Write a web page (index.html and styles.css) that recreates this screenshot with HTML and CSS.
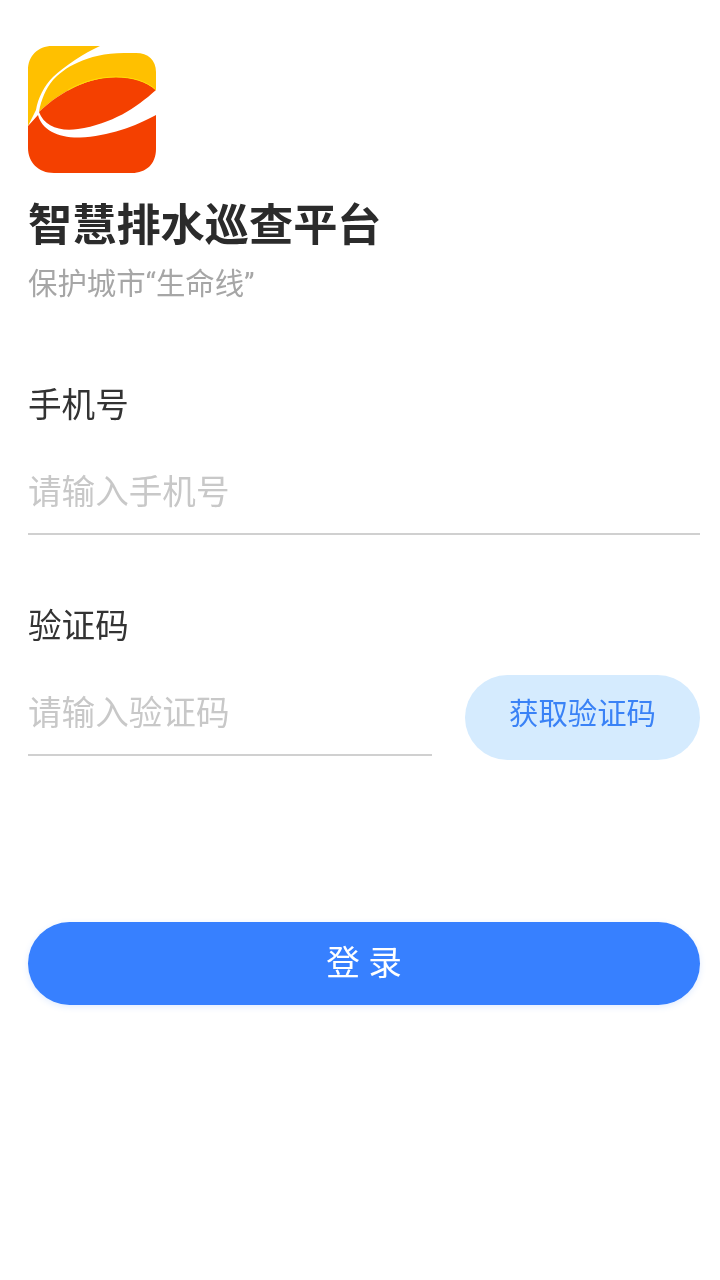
FILE: index.html
```html
<!DOCTYPE html>
<html lang="zh-CN">
<head>
<meta charset="utf-8">
<title>智慧排水巡查平台</title>
<link rel="stylesheet" href="styles.css">
</head>
<body>
<main class="page">
  <svg class="logo" viewBox="0 0 128 128" aria-hidden="true">
    <path class="logo-yellow" d="M24 0H72C56 7 37 20 25 31C16 40 10 52 8 64L0 80V24C0 10 10 0 24 0Z"/>
    <path class="logo-yellow" d="M11 66C13 54 18 42 25 34C35 23 58 7 96 7H108C120 7 128 14 128 26V44C118 35 104 31 88 31C62 31 34 44 11 66Z"/>
    <path class="logo-red" d="M11 66C34 44 62 31 88 31C104 31 118 35 128 44C108 62 84 78 50 83C32 86 16 80 11 66Z"/>
    <path class="logo-edge" d="M40 44C56 35 72 31 88 31C104 31 118 35 128 44"/>
    <path class="logo-red" d="M128 69V103C128 118 118 127 104 127H26C10 127 0 116 0 102V80L10 69C14 84 30 92 52 91.5C80 90.5 108 80 128 69Z"/>
  </svg>
  <h1 class="title">智慧排水巡查平台</h1>
  <p class="subtitle">保护城市“生命线”</p>

  <form class="form">
    <div class="field field-phone">
      <div class="label">手机号</div>
      <div class="input">请输入手机号</div>
    </div>
    <div class="field field-code">
      <div class="label">验证码</div>
      <div class="code-row">
        <div class="input input-code">请输入验证码</div>
        <div class="code-btn">获取验证码</div>
      </div>
    </div>
    <div class="login-btn">登 录</div>
  </form>
</main>
</body>
</html>
```

FILE: styles.css
```css
* { box-sizing: border-box; }
html, body { margin: 0; padding: 0; background: #fff; }
body {
  font-family: Roboto, "Noto Sans CJK SC", sans-serif;
  width: 720px;
  height: 1280px;
  overflow: hidden;
}
.page { padding: 46px 20px 0 28px; filter: blur(0.4px); }
.logo { display: block; width: 128px; height: 128px; }
.logo-yellow { fill: #ffc000; }
.logo-red { fill: #f44000; }
.logo-edge { fill: none; stroke: #ffe000; stroke-width: 1; }
.title {
  margin: 24px 0 0;
  font-size: 44.2px;
  line-height: 56px;
  font-weight: 700;
  color: #2b2b2b;
}
.subtitle {
  margin: 12px 0 0;
  font-size: 29.4px;
  line-height: 36px;
  color: #a6a6a6;
}
.form { margin-top: 82px; }
.label {
  font-size: 33.6px;
  line-height: 44px;
  color: #333;
}
.input {
  height: 87px;
  padding-bottom: 3px;
  display: flex;
  align-items: center;
  margin-top: 20px;
  font-size: 33.6px;
  color: #c8c8c8;
  border-bottom: 2px solid #d0d0d0;
}
.field-code { margin-top: 70px; }
.code-row { display: flex; justify-content: space-between; align-items: flex-start; }
.input-code { width: 404px; }
.code-btn {
  width: 235px;
  height: 85px;
  margin-top: 26px;
  padding-bottom: 13px;
  border-radius: 43px;
  background: #d5ebfe;
  color: #3a82f6;
  font-size: 29.4px;
  display: flex;
  align-items: center;
  justify-content: center;
}
.login-btn {
  margin-top: 162px;
  height: 83px;
  padding-bottom: 6px;
  border-radius: 42px;
  background: #3780ff;
  color: #fff;
  font-size: 33.6px;
  display: flex;
  align-items: center;
  justify-content: center;
  box-shadow: 0 2px 6px rgba(55, 128, 255, 0.15);
}
```
